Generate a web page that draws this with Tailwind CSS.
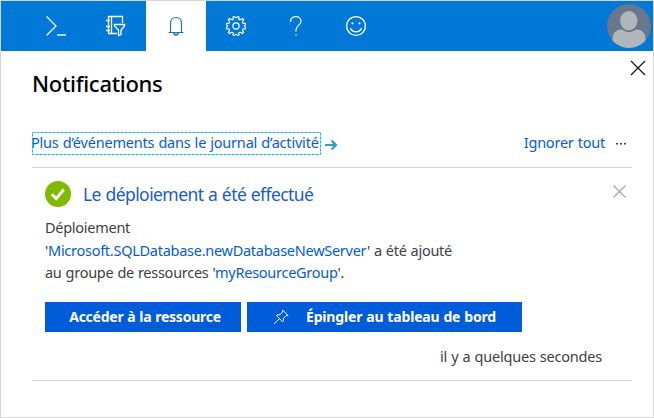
<!DOCTYPE html>
<html lang="fr">
<head>
<meta charset="utf-8">
<title>Notifications</title>
<script src="https://cdn.jsdelivr.net/npm/@tailwindcss/browser@4"></script>
</head>
<body class="w-[654px] h-[418px] overflow-hidden bg-white font-['Noto_Sans','Open_Sans',sans-serif] text-[#404040]">
<div class="flex h-[418px] w-[654px] flex-col border border-[#d5d5d5] whitespace-nowrap">
  <header class="flex h-[50px] shrink-0 items-center bg-[#0078d7] pl-[25px] text-white">
    <button class="flex h-[50px] w-[60px] items-center justify-center" aria-label="Cloud Shell">
      <svg class="h-[24px] w-[24px]" viewBox="0 0 24 24" fill="none" stroke="currentColor"><path d="M2.500 2.500 12 12 2.500 21.500" stroke-width="1.300"/><path d="M13 21h9" stroke-width="2" opacity=".7"/></svg>
    </button>
    <button class="flex h-[50px] w-[60px] items-center justify-center" aria-label="Filtre">
      <svg class="h-[24px] w-[24px]" viewBox="0 0 24 24" fill="none" stroke="currentColor" stroke-width="1.300"><path d="M18.500 9V2.500H4.500V19.500H13M7.500 2.500V19.500M2 6.500H6M2 12.500H6M2 16.500H6M10.500 10.500H20.500V12L17 16V20.500L14.500 21.500V16L10.500 12Z"/></svg>
    </button>
    <button class="flex h-[50px] w-[60px] items-center justify-center bg-white text-[#2272b9]" aria-label="Notifications">
      <svg class="h-[24px] w-[24px]" viewBox="0 0 24 24" fill="none" stroke="currentColor" stroke-width="1.200"><path d="M4.500 18.500H19.500M6.500 18V9.500C6.500 6 8.500 3.500 12 3.500S17.500 6 17.500 9.500V18"/><path d="M10 19Q10 20.800 12 20.800T14 19" stroke-width="1.700"/></svg>
    </button>
    <button class="flex h-[50px] w-[60px] items-center justify-center" aria-label="Paramètres">
      <svg class="h-[24px] w-[24px]" viewBox="0 0 24 24" fill="none" stroke="currentColor" stroke-width="1.200" stroke-linejoin="round"><path d="M10.500 2.500Q12 5 13.500 2.500L15 3L14.800 5.400Q16.500 6.300 18.600 4.500L19.700 5.700Q18 7.500 18.800 9.200L21.500 9.500V11Q19 12 21.500 13.300V14.800L18.800 15Q18 16.700 19.700 18.400L18.600 19.600Q16.500 17.800 14.800 18.700L15 21L13.500 21.500Q12 19 10.500 21.500L9 21L9.200 18.700Q7.500 17.800 5.400 19.600L4.300 18.400Q6 16.700 5.200 15L2.500 14.800V13.300Q5 12 2.500 11V9.500L5.200 9.200Q6 7.500 4.300 5.700L5.400 4.500Q7.500 6.300 9.200 5.400L9 3Z"/><circle cx="12" cy="12" r="3.100"/></svg>
    </button>
    <button class="flex h-[50px] w-[60px] items-center justify-center" aria-label="Aide">
      <svg class="h-[24px] w-[24px]" viewBox="0 0 24 24" fill="none" stroke="currentColor" stroke-width="1.200"><path d="M6.500 8C6.500 4.500 8.700 2.600 11.700 2.600S17 4.500 17 7.200C17 11 12 11.800 12 15.800V17.500"/><path d="M11.400 20.900H12.700" stroke-width="1.300"/></svg>
    </button>
    <button class="flex h-[50px] w-[60px] items-center justify-center" aria-label="Commentaires">
      <svg class="h-[24px] w-[24px]" viewBox="0 0 24 24" fill="none" stroke="currentColor" stroke-width="1.400"><circle cx="12" cy="12" r="9.400"/><path d="M6.500 14.200Q8 17.700 12 17.700T17.500 14.200"/><circle cx="8.500" cy="9.300" r="1.100" fill="currentColor" stroke="none"/><circle cx="15.500" cy="9.300" r="1.100" fill="currentColor" stroke="none"/></svg>
    </button>
    <svg class="ml-auto mr-[1px] h-[46px] w-[46px]" viewBox="0 0 46 46"><defs><clipPath id="disc"><circle cx="23" cy="23" r="22"/></clipPath></defs><g clip-path="url(#disc)"><rect width="46" height="46" fill="#68778d"/><path d="M6.500 46V36Q6.500 26.500 16 26.500Q23 31.500 30 26.500Q39.500 26.500 39.500 36V46Z" fill="#b0b7bb"/><ellipse cx="22.800" cy="17.600" rx="10" ry="11.300" fill="#68778d"/><ellipse cx="22.800" cy="17.600" rx="8.700" ry="9.700" fill="#b0b7bb"/></g></svg>
  </header>

  <main class="flex flex-col pl-[31px] pr-[21px]">
    <div class="flex h-[81px] items-start justify-between">
      <h1 class="mt-[16px] text-[22px] leading-[32px] font-medium tracking-[-0.3px] text-black">Notifications</h1>
      <svg class="mt-[9px] -mr-[14px] h-[16px] w-[16px]" viewBox="0 0 16 16" fill="none" stroke="#111" stroke-width="1.200"><path d="M1 1 15 15M15 1 1 15"/></svg>
    </div>
    <div class="flex h-[22px] items-center text-[14.5px] leading-[22px] text-[#015cda]">
      <a class="relative flex h-[22px] w-[288px] items-center tracking-[-0.2px] [word-spacing:0.5px]"><span class="-ml-[1px] -mt-[2px]">Plus d’événements dans le journal d’activité</span>
        <svg class="absolute left-0 top-0 h-[23px] w-[289px]" viewBox="0 0 289 23" fill="none"><rect x=".5" y=".5" width="288" height="22" stroke="#00bcf2" stroke-dasharray="3 1"/></svg>
      </a>
      <svg class="mt-[4px] ml-[5px] h-[12px] w-[13px]" viewBox="0 0 13 12" fill="none" stroke="#3999c6" stroke-width="2.200"><path d="M0 6H11M6.500 1.500 11 6 6.500 10.500"/></svg>
      <a class="-mt-[2px] ml-auto tracking-[-0.22px] [word-spacing:0.5px]">Ignorer tout</a>
      <svg class="ml-[10px] mr-[5px] mt-[3px] h-[3px] w-[12px]" viewBox="0 0 12 3" fill="#404040"><path d="M1 0h2v1.500H1zM5 0h2v1.500H5zM9 0h2v1.500H9z"/></svg>
    </div>

    <article class="mt-[13px] flex h-[214px] flex-col border-y border-[#d2d2d2] pl-[13px]">
      <div class="mt-[12px] flex h-[28px] items-center">
        <svg class="h-[26px] w-[26px]" viewBox="0 0 26 26"><circle cx="13" cy="13" r="13" fill="#7fba00"/><path d="M6.800 13.200 11.200 17.600 18.800 8.500" fill="none" stroke="#fff" stroke-width="2.900"/></svg>
        <h2 class="ml-[12px] text-[17.5px] leading-[26px] tracking-[-0.57px] [word-spacing:0.6px] text-[#1b5bce]">Le déploiement a été effectué</h2>
        <svg class="-mt-[6px] mr-[6px] ml-auto h-[13px] w-[13px]" viewBox="0 0 13 13" fill="none" stroke="#a5a5a5" stroke-width="1.200"><path d="M.5.500 12.500 12.500M12.500.500.500 12.500"/></svg>
      </div>
      <p class="mt-[8px] text-[14.5px] leading-[22.5px] tracking-[-0.27px] [word-spacing:0.5px]">
        <span class="block w-fit">Déploiement</span>
        <span class="block w-fit">'<a class="text-[#015cda]">Microsoft.SQLDatabase.newDatabaseNewServer</a>' a été ajouté</span>
        <span class="block w-fit">au groupe de ressources '<a class="text-[#015cda]">myResourceGroup</a>'.</span>
      </p>
      <div class="mt-[18.5px] flex gap-[6px] text-[14px] leading-[30px] font-bold text-white">
        <button class="flex h-[30px] w-[196px] items-center justify-center bg-[#015cda] pl-[4px] tracking-[-0.25px] [word-spacing:0.5px]">Accéder à la ressource</button>
        <button class="flex h-[30px] w-[275px] items-center bg-[#015cda] pl-[26px] tracking-[-0.17px] [word-spacing:0.5px]">
          <svg class="h-[16px] w-[16px]" viewBox="0 0 16 16" fill="none" stroke="#fff" stroke-width="1"><path d="M9.500 1 15 6.500 13 6.700 10.300 9.500Q10.800 11.500 9.700 13L3.500 6.500Q5 5.200 7 5.800L9.500 3ZM6.500 9.700 1 15"/></svg>
          <span class="ml-[17px]">Épingler au tableau de bord</span>
        </button>
      </div>
      <time class="mt-[13px] mr-[30px] self-end text-[14.5px] leading-[22px] tracking-[-0.2px] [word-spacing:0.5px]">il y a quelques secondes</time>
    </article>
  </main>
</div>
</body>
</html>
